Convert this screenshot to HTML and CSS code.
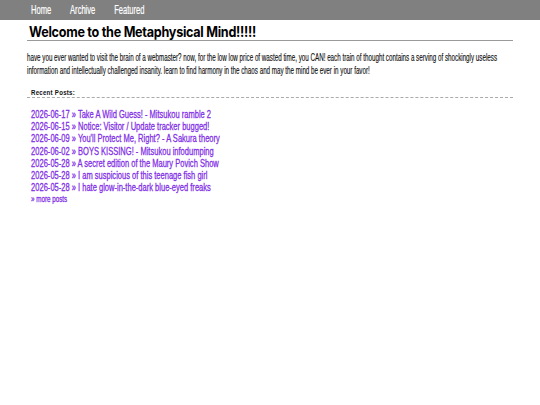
FILE: index.html
```html
<!DOCTYPE html>
<html>
<head>
<meta charset="utf-8">
<link rel="stylesheet" href="styles.css">
</head>
<body>
<nav class="topnav">
  <div class="navlinks narrow">
    <a href="#">Home</a>
    <a href="#">Archive</a>
    <a href="#">Featured</a>
  </div>
</nav>
<main class="content">
  <h1 class="title"><span class="narrow">Welcome to the Metaphysical Mind!!!!!</span></h1>
  <p class="intro"><span class="narrow">have you ever wanted to visit the brain of a webmaster? now, for the low low price of wasted time, you CAN! each train of thought contains a serving of shockingly useless information and intellectually challenged insanity. learn to find harmony in the chaos and may the mind be ever in your favor!</span></p>
  <h2 class="recent"><span class="narrow">Recent Posts:</span></h2>
  <ul class="posts narrow">
    <li><a href="#">2026-06-17 » Take A Wild Guess! - Mitsukou ramble 2</a></li>
    <li><a href="#">2026-06-15 » Notice: Visitor / Update tracker bugged!</a></li>
    <li><a href="#">2026-06-09 » You'll Protect Me, Right? - A Sakura theory</a></li>
    <li><a href="#">2026-06-02 » BOYS KISSING! - Mitsukou infodumping</a></li>
    <li><a href="#">2026-05-28 » A secret edition of the Maury Povich Show</a></li>
    <li><a href="#">2026-05-28 » I am suspicious of this teenage fish girl</a></li>
    <li><a href="#">2026-05-28 » I hate glow-in-the-dark blue-eyed freaks</a></li>
  </ul>
  <div class="more-wrap"><a class="more narrow" href="#">» more posts</a></div>
</main>
</body>
</html>
```

FILE: styles.css
```css
html, body {
  margin: 0;
  padding: 0;
  background: #fff;
  overflow: hidden;
}
body {
  font-family: "Liberation Sans", Arial, sans-serif;
  color: #111;
}
/* condensed face emulation: width is widened then squeezed back */
.narrow {
  display: block;
  width: calc(100% / var(--s));
  transform: scaleX(var(--s));
  transform-origin: 0 0;
}
.topnav {
  background: #808080;
  height: 20px;
  padding-left: 31px;
}
.navlinks {
  --s: 0.63;
  display: flex;
  align-items: center;
  height: 20px;
  gap: 30px;
}
.topnav a {
  color: #fff;
  text-decoration: none;
  font-size: 12px;
  -webkit-text-stroke: 0.2px #fff;
}
.content {
  width: 486px;
  margin: 0 auto;
}
.title {
  font-family: Inter, "Liberation Sans", sans-serif;
  font-size: 14px;
  line-height: 16px;
  font-weight: 700;
  letter-spacing: -0.3px;
  color: #000;
  margin: 4px 0 0;
  padding: 0 0 0 2px;
  border-bottom: 1px solid #9a9a9a;
}
.title .narrow {
  --s: 0.9;
}
.intro {
  font-size: 10px;
  line-height: 13px;
  margin: 10px 0 0;
  -webkit-text-stroke: 0.15px #111;
}
.intro .narrow {
  --s: 0.625;
}
.recent {
  font-size: 7px;
  line-height: 8px;
  font-weight: bold;
  letter-spacing: 0.3px;
  margin: 12px 0 0;
  padding: 0 0 0 4px;
  border-bottom: 1px dashed #aaa;
}
.recent .narrow {
  --s: 0.87;
}
.posts {
  --s: 0.685;
  list-style: none;
  margin: 10px 0 0;
  padding: 0 0 0 6px;
}
.posts li {
  font-size: 11px;
  line-height: 12.2px;
}
.posts a, .more {
  color: #7f2de6;
  text-decoration: none;
  -webkit-text-stroke: 0.3px #7f2de6;
}
.more-wrap {
  margin-top: 1px;
  padding-left: 4px;
}
.more {
  --s: 0.66;
  font-size: 9.5px;
  line-height: 10px;
}
```
